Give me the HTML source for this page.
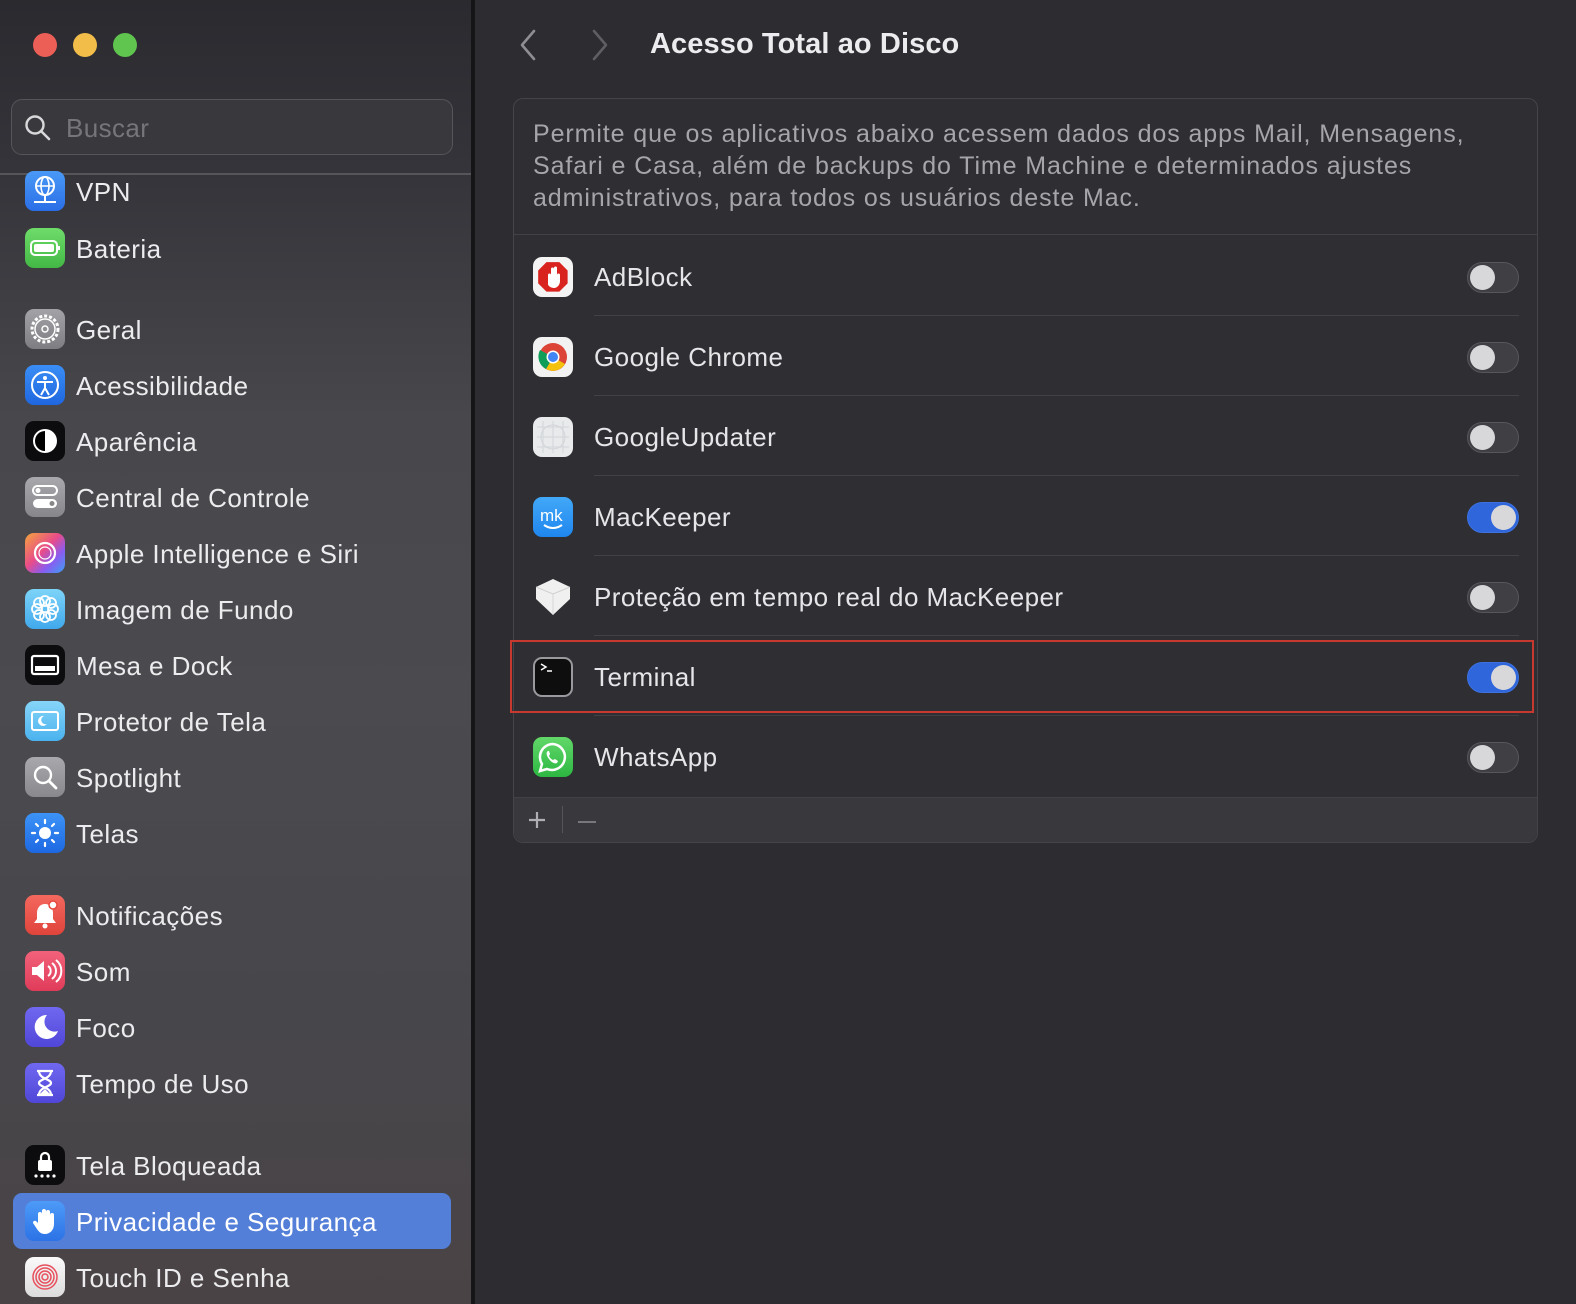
<!DOCTYPE html>
<html><head><meta charset="utf-8"><style>
*{margin:0;padding:0;box-sizing:border-box}
body{width:1576px;height:1304px;overflow:hidden;background:#2c2c31;font-family:"Liberation Sans",sans-serif;position:relative;color:#e6e6e8}
#side{position:absolute;left:0;top:0;width:471px;height:1304px;background:linear-gradient(180deg,#2a2a2f 0px,#34343a 170px,#48484c 420px,#4b4b4f 700px,#47474b 1000px,#4a4346 1304px)}
#sideb{position:absolute;left:471px;top:0;width:4px;height:1304px;background:#151518}
.tl{position:absolute;top:33px;width:24px;height:24px;border-radius:50%}
#search{position:absolute;left:11px;top:99px;width:442px;height:56px;border-radius:11px;background:#38383d;border:1px solid #55555a}
#search span{position:absolute;left:54px;top:13px;font-size:26px;color:#75757a;letter-spacing:0.4px}
#div{position:absolute;left:0;top:173px;width:471px;height:2px;background:#56565a}
.it{position:absolute;left:25px;height:40px;width:440px}
.ic{position:absolute;left:0;top:0;width:40px;height:40px;border-radius:9px;overflow:hidden}
.it .t{position:absolute;left:51px;top:6px;font-size:26px;color:#ececee;white-space:nowrap;letter-spacing:0.45px}
#sel{position:absolute;left:13px;top:1193px;width:438px;height:56px;border-radius:9px;background:#537fd9}
#title{position:absolute;left:650px;top:28px;font-size:29px;font-weight:bold;color:#ececee;letter-spacing:0.1px}
#panel{position:absolute;left:513px;top:98px;width:1025px;height:745px;border-radius:10px;background:#2e2e33;border:1px solid #444449;overflow:hidden}
#desc{position:absolute;left:533px;top:118px;font-size:25px;line-height:32px;color:#a5a5aa;width:965px;letter-spacing:0.9px}
.sep{position:absolute;height:1px;background:#414146}
.row{position:absolute;left:533px;width:990px;height:40px}
.row .ic{border-radius:9px}
.row .t{position:absolute;left:61px;top:5px;font-size:26px;color:#e6e6e8;white-space:nowrap;letter-spacing:0.45px}
.tg{position:absolute;left:934px;top:5px;width:52px;height:31px;border-radius:16px;background:#3f3f44;border:1px solid #56565b}
.tg::after{content:"";position:absolute;left:2px;top:2px;width:25px;height:25px;border-radius:50%;background:#d8d8da}
.tg.on{background:#2f66dc;border-color:#3d72e0}
.tg.on::after{left:23px}
#bar{position:absolute;left:514px;top:797px;width:1023px;height:45px;background:#38383d;border-radius:0 0 10px 10px;border-top:1px solid #414146}
</style></head><body>
<div id="side"></div><div id="sideb"></div>
<div class="tl" style="left:33px;background:#ec5f57"></div>
<div class="tl" style="left:73px;background:#f3bd4a"></div>
<div class="tl" style="left:113px;background:#5fc54f"></div>
<div id="search"><svg style="position:absolute;left:12px;top:14px" width="28" height="28" viewBox="0 0 28 28"><circle cx="11" cy="11" r="8.5" fill="none" stroke="#d8d8da" stroke-width="2.4"/><line x1="17" y1="17" x2="25" y2="25" stroke="#d8d8da" stroke-width="2.6" stroke-linecap="round"/></svg><span>Buscar</span></div>
<div id="div"></div>
<div id="sel"></div>

<div class="it" style="top:171px"><div class="ic" style="background:linear-gradient(#4a9af7,#2a6ee6)"><svg width="40" height="40"><circle cx="20" cy="15" r="9" fill="none" stroke="#fff" stroke-width="2"/><ellipse cx="20" cy="15" rx="4" ry="9" fill="none" stroke="#fff" stroke-width="1.6"/><line x1="11" y1="15" x2="29" y2="15" stroke="#fff" stroke-width="1.6"/><line x1="20" y1="24" x2="20" y2="31" stroke="#fff" stroke-width="2"/><line x1="9" y1="31" x2="31" y2="31" stroke="#fff" stroke-width="2"/></svg></div><span class="t">VPN</span></div>
<div class="it" style="top:228px"><div class="ic" style="background:linear-gradient(#6fdc6a,#43b844)"><svg width="40" height="40"><rect x="6" y="13" width="26" height="14" rx="4" fill="none" stroke="#fff" stroke-width="2"/><rect x="9" y="16" width="20" height="8" rx="2" fill="#fff"/><rect x="33" y="18" width="2" height="4" fill="#fff"/></svg></div><span class="t">Bateria</span></div>
<div class="it" style="top:309px"><div class="ic" style="background:linear-gradient(#a2a2a7,#7d7d82)"><svg width="40" height="40"><circle cx="20" cy="20" r="13" fill="none" stroke="#fff" stroke-width="3" stroke-dasharray="3 2"/><circle cx="20" cy="20" r="10" fill="none" stroke="#fff" stroke-width="1.5"/><circle cx="20" cy="20" r="3" fill="none" stroke="#fff" stroke-width="1.5"/></svg></div><span class="t">Geral</span></div>
<div class="it" style="top:365px"><div class="ic" style="background:linear-gradient(#3a8ef5,#1f67e0)"><svg width="40" height="40"><circle cx="20" cy="20" r="13" fill="none" stroke="#fff" stroke-width="2"/><circle cx="20" cy="13" r="2" fill="#fff"/><path d="M12 17h16M20 17v6l-4 7M20 23l4 7" stroke="#fff" stroke-width="2" fill="none"/></svg></div><span class="t">Acessibilidade</span></div>
<div class="it" style="top:421px"><div class="ic" style="background:#0c0c0e"><svg width="40" height="40"><circle cx="20" cy="20" r="12" fill="#fff"/><path d="M20 10a10 10 0 0 0 0 20z" fill="#000"/></svg></div><span class="t">Aparência</span></div>
<div class="it" style="top:477px"><div class="ic" style="background:linear-gradient(#a8a8ad,#86868b)"><svg width="40" height="40"><rect x="8" y="9" width="24" height="9" rx="4.5" fill="none" stroke="#fff" stroke-width="2"/><circle cx="13" cy="13.5" r="2.5" fill="#fff"/><rect x="8" y="22" width="24" height="9" rx="4.5" fill="#fff"/><circle cx="27" cy="26.5" r="2.5" fill="#888"/></svg></div><span class="t">Central de Controle</span></div>
<div class="it" style="top:533px"><div class="ic" style="background:linear-gradient(135deg,#f4a43c,#e84c8a 45%,#8a5cf0 70%,#3aa0f5)"><svg width="40" height="40"><circle cx="20" cy="20" r="10" fill="none" stroke="#fff" stroke-width="2.2"/><circle cx="20" cy="20" r="6" fill="none" stroke="#fff" stroke-width="1.2"/></svg></div><span class="t">Apple Intelligence e Siri</span></div>
<div class="it" style="top:589px"><div class="ic" style="background:linear-gradient(#7dd4f8,#40a8ec)"><svg width="40" height="40"><g fill="none" stroke="#fff" stroke-width="1.8"><circle cx="20" cy="12" r="5"/><circle cx="20" cy="28" r="5"/><circle cx="12" cy="20" r="5"/><circle cx="28" cy="20" r="5"/><circle cx="14" cy="14" r="5"/><circle cx="26" cy="26" r="5"/><circle cx="26" cy="14" r="5"/><circle cx="14" cy="26" r="5"/></g></svg></div><span class="t">Imagem de Fundo</span></div>
<div class="it" style="top:645px"><div class="ic" style="background:#0c0c0e"><svg width="40" height="40"><rect x="7" y="11" width="26" height="18" rx="2" fill="none" stroke="#fff" stroke-width="2.2"/><rect x="10" y="21" width="20" height="5" fill="#fff"/></svg></div><span class="t">Mesa e Dock</span></div>
<div class="it" style="top:701px"><div class="ic" style="background:linear-gradient(#86d5f8,#4bb2ee)"><svg width="40" height="40"><rect x="7" y="11" width="26" height="18" rx="2" fill="none" stroke="#fff" stroke-width="2"/><path d="M19 15a5 5 0 1 0 3 8a4 4 0 0 1-3-8z" fill="#fff"/></svg></div><span class="t">Protetor de Tela</span></div>
<div class="it" style="top:757px"><div class="ic" style="background:linear-gradient(#a8a8ad,#88888d)"><svg width="40" height="40"><circle cx="18" cy="18" r="8" fill="none" stroke="#fff" stroke-width="2.4"/><line x1="24" y1="24" x2="31" y2="31" stroke="#fff" stroke-width="2.8" stroke-linecap="round"/></svg></div><span class="t">Spotlight</span></div>
<div class="it" style="top:813px"><div class="ic" style="background:linear-gradient(#3d93f7,#1d68e2)"><svg width="40" height="40"><circle cx="20" cy="20" r="6" fill="#fff"/><g stroke="#fff" stroke-width="2.2" stroke-linecap="round"><line x1="20" y1="7" x2="20" y2="10"/><line x1="20" y1="30" x2="20" y2="33"/><line x1="7" y1="20" x2="10" y2="20"/><line x1="30" y1="20" x2="33" y2="20"/><line x1="11" y1="11" x2="13" y2="13"/><line x1="27" y1="27" x2="29" y2="29"/><line x1="29" y1="11" x2="27" y2="13"/><line x1="11" y1="29" x2="13" y2="27"/></g></svg></div><span class="t">Telas</span></div>
<div class="it" style="top:895px"><div class="ic" style="background:linear-gradient(#f4685e,#e0443b)"><svg width="40" height="40"><path d="M20 9c-5 0-8 4-8 9v6l-3 4h22l-3-4v-6c0-5-3-9-8-9z" fill="#fff"/><circle cx="20" cy="31" r="2.5" fill="#fff"/><circle cx="28" cy="10" r="4" fill="#fff" stroke="#e8493f" stroke-width="1.5"/></svg></div><span class="t">Notificações</span></div>
<div class="it" style="top:951px"><div class="ic" style="background:linear-gradient(#f2627a,#e03c5a)"><svg width="40" height="40"><path d="M7 16h5l7-6v20l-7-6H7z" fill="#fff"/><g fill="none" stroke="#fff" stroke-width="2"><path d="M23 15a6 6 0 0 1 0 10"/><path d="M27 12a10 10 0 0 1 0 16"/><path d="M31 9a14 14 0 0 1 0 22"/></g></svg></div><span class="t">Som</span></div>
<div class="it" style="top:1007px"><div class="ic" style="background:linear-gradient(#7068f0,#5046d8)"><svg width="40" height="40"><path d="M22 8a12 12 0 1 0 11 16a10 10 0 0 1-11-16z" fill="#fff"/></svg></div><span class="t">Foco</span></div>
<div class="it" style="top:1063px"><div class="ic" style="background:linear-gradient(#7068f0,#5046d8)"><svg width="40" height="40"><path d="M12 8h16M12 32h16M14 8c0 8 12 8 12 12s-12 4-12 12M26 8c0 8-12 8-12 12s12 4 12 12" stroke="#fff" stroke-width="2.2" fill="none"/><path d="M15 31l5-5 5 5z" fill="#fff"/></svg></div><span class="t">Tempo de Uso</span></div>
<div class="it" style="top:1145px"><div class="ic" style="background:#0c0c0e"><svg width="40" height="40"><rect x="13" y="15" width="14" height="11" rx="2" fill="#fff"/><path d="M16 15v-3a4 4 0 0 1 8 0v3" fill="none" stroke="#fff" stroke-width="2.2"/><g fill="#fff"><circle cx="11" cy="31" r="1.6"/><circle cx="17" cy="31" r="1.6"/><circle cx="23" cy="31" r="1.6"/><circle cx="29" cy="31" r="1.6"/></g></svg></div><span class="t">Tela Bloqueada</span></div>
<div class="it" style="top:1201px"><div class="ic" style="background:linear-gradient(#4d9bf8,#2c73e6)"><svg width="40" height="40"><path d="M13 22v-9a2 2 0 0 1 4 0v6V10a2 2 0 0 1 4 0v9v-8a2 2 0 0 1 4 0v9v-6a2 2 0 0 1 4 0v9c0 6-4 10-9 10c-4 0-6-2-8-5l-4-6a2 2 0 0 1 3-2z" fill="#fff"/></svg></div><span class="t" style="color:#fff">Privacidade e Segurança</span></div>
<div class="it" style="top:1257px"><div class="ic" style="background:linear-gradient(#fafafa,#dcdcdc)"><svg width="40" height="40"><g fill="none" stroke="#e8505e" stroke-width="1.5"><circle cx="20" cy="20" r="3"/><circle cx="20" cy="20" r="6"/><circle cx="20" cy="20" r="9"/><circle cx="20" cy="20" r="12"/></g></svg></div><span class="t">Touch ID e Senha</span></div>

<svg style="position:absolute;left:518px;top:28px" width="20" height="34"><path d="M16 3L4 17l12 14" fill="none" stroke="#8e8e93" stroke-width="2.6" stroke-linecap="round" stroke-linejoin="round"/></svg>
<svg style="position:absolute;left:590px;top:28px" width="20" height="34"><path d="M4 3l12 14L4 31" fill="none" stroke="#5e5e63" stroke-width="2.6" stroke-linecap="round" stroke-linejoin="round"/></svg>
<div id="title">Acesso Total ao Disco</div>

<div id="panel"></div>
<div id="desc">Permite que os aplicativos abaixo acessem dados dos apps Mail, Mensagens,<br>Safari e Casa, além de backups do Time Machine e determinados ajustes<br>administrativos, para todos os usuários deste Mac.</div>
<div class="sep" style="left:514px;top:234px;width:1023px"></div>
<div class="sep" style="left:594px;top:315px;width:925px"></div>
<div class="sep" style="left:594px;top:395px;width:925px"></div>
<div class="sep" style="left:594px;top:475px;width:925px"></div>
<div class="sep" style="left:594px;top:555px;width:925px"></div>
<div class="sep" style="left:594px;top:635px;width:925px"></div>
<div class="sep" style="left:594px;top:715px;width:925px"></div>

<div class="row" style="top:257px"><div class="ic" style="background:#f4f4f4"><svg width="40" height="40"><path d="M13 4h14l9 9v14l-9 9H13l-9-9V13z" fill="#d8231f" transform="translate(1.5 1.5) scale(.92)"/><path d="M15 27v-9a1.5 1.5 0 0 1 3 0v-6a1.5 1.5 0 0 1 3 0v5v-6a1.5 1.5 0 0 1 3 0v7a1.5 1.5 0 0 1 3 0v6c0 4-3 7-6 7s-6-2-6-4z" fill="#fff"/></svg></div><span class="t">AdBlock</span><div class="tg"></div></div>
<div class="row" style="top:337px"><div class="ic" style="background:#f2f2f2"><svg width="40" height="40"><circle cx="20" cy="20" r="14" fill="#db4437"/><path d="M20 20L32 27A14 14 0 0 1 13 32z" fill="#f4c20d"/><path d="M20 20L13 32A14 14 0 0 1 7 13z" fill="#0f9d58"/><circle cx="20" cy="20" r="6.5" fill="#fff"/><circle cx="20" cy="20" r="5" fill="#4285f4"/></svg></div><span class="t">Google Chrome</span><div class="tg"></div></div>
<div class="row" style="top:417px"><div class="ic" style="background:#e8eaec"><svg width="40" height="40"><g stroke="#d2d5d8" stroke-width="1" fill="none"><path d="M4 10h32M4 20h32M4 30h32M10 4v32M20 4v32M30 4v32"/><circle cx="20" cy="20" r="12"/></g></svg></div><span class="t">GoogleUpdater</span><div class="tg"></div></div>
<div class="row" style="top:497px"><div class="ic" style="background:linear-gradient(#42a8f8,#1f86ee)"><svg width="40" height="40"><text x="7" y="24" font-family="Liberation Sans" font-size="17" fill="#fff">mk</text><path d="M11 28q9 6 18 0" fill="none" stroke="#fff" stroke-width="2"/></svg></div><span class="t">MacKeeper</span><div class="tg on"></div></div>
<div class="row" style="top:577px"><div class="ic" style="background:transparent"><svg width="40" height="40"><path d="M20 2L37 10V22L20 38L3 22V10z" fill="#f0f0f0"/><path d="M3 10L20 17L37 10" fill="none" stroke="#d0d0d0" stroke-width="1"/><path d="M20 17v21" stroke="#d6d6d6"/></svg></div><span class="t">Proteção em tempo real do MacKeeper</span><div class="tg"></div></div>
<div class="row" style="top:657px"><div class="ic" style="background:#0e0e0e;border:2px solid #9a9a9e"><svg width="36" height="36"><path d="M6 5l5 3-5 3" fill="none" stroke="#fff" stroke-width="1.5"/><line x1="12" y1="12" x2="17" y2="12" stroke="#fff" stroke-width="1.5"/></svg></div><span class="t">Terminal</span><div class="tg on"></div></div>
<div class="row" style="top:737px"><div class="ic" style="background:linear-gradient(#62d869,#2db742)"><svg width="40" height="40"><path d="M20 7a13 13 0 0 0-11 20l-2 7 7-2A13 13 0 1 0 20 7z" fill="none" stroke="#fff" stroke-width="2.5"/><path d="M15 14c-2 1-2 4 1 8s6 5 8 4l1-2-3-2-2 1c-2-1-3-2-4-4l1-2-1-3z" fill="#fff"/></svg></div><span class="t">WhatsApp</span><div class="tg"></div></div>

<div style="position:absolute;left:510px;top:640px;width:1024px;height:73px;border:2px solid #c7392e"></div>

<div id="bar"></div>
<svg style="position:absolute;left:527px;top:810px" width="20" height="20"><path d="M10 2v16M2 10h16" stroke="#b0b0b4" stroke-width="2.2"/></svg>
<div style="position:absolute;left:562px;top:806px;width:1px;height:27px;background:#55555a"></div>
<div style="position:absolute;left:578px;top:821px;width:18px;height:2px;background:#78787c"></div>
</body></html>
